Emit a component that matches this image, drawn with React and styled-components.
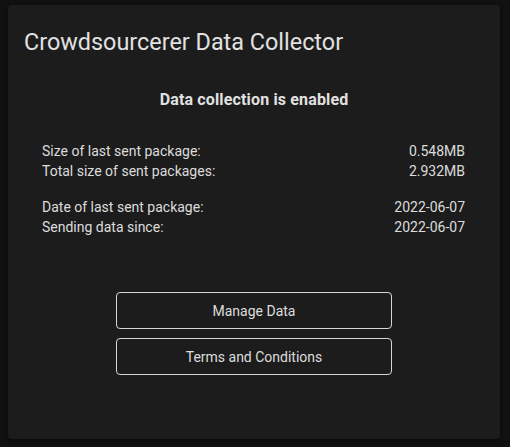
import React from "react";
import styled, { createGlobalStyle } from "styled-components";

const Global = createGlobalStyle`
  html, body { margin: 0; padding: 0; background: #111111; }
  body { font-family: Roboto, "Noto Sans", sans-serif; color: #e0e0e0; }
`;

const Page = styled.div`
  padding: 5px 10px 8px 8px;
`;

const Card = styled.section`
  box-sizing: border-box;
  height: 434px;
  background: #1c1c1c;
  border-radius: 4px;
  box-shadow: 0 2px 4px rgba(0, 0, 0, 0.5);
  padding: 22px 16px 0 16px;
  display: flex;
  flex-direction: column;
`;

const Title = styled.h1`
  margin: 0;
  font-size: 23.4px;
  font-weight: 400;
  line-height: 30px;
  color: #e1e1e1;
`;

const Status = styled.h2`
  margin: 33px 0 0 0;
  font-size: 16px;
  font-weight: 700;
  line-height: 20px;
  letter-spacing: 0.15px;
  text-align: center;
  color: #e1e1e1;
`;

const Stats = styled.div`
  margin: 31px 19px 0 18px;
  display: flex;
  flex-direction: column;
  gap: 16px;
`;

const Group = styled.div`
  display: flex;
  flex-direction: column;
`;

const Row = styled.div`
  display: flex;
  justify-content: space-between;
  font-size: 14px;
  line-height: 20px;
  color: #dcdcdc;
`;

const Actions = styled.div`
  margin-top: 55px;
  display: flex;
  flex-direction: column;
  align-items: center;
  gap: 9px;
`;

const Button = styled.button`
  box-sizing: border-box;
  width: 276px;
  height: 37px;
  background: transparent;
  border: 1.5px solid #d6d6d6;
  border-radius: 4px;
  color: #dcdcdc;
  font-family: Roboto, "Noto Sans", sans-serif;
  font-size: 14px;
  cursor: pointer;
`;

const stats = [
  [
    ["Size of last sent package:", "0.548MB"],
    ["Total size of sent packages:", "2.932MB"],
  ],
  [
    ["Date of last sent package:", "2022-06-07"],
    ["Sending data since:", "2022-06-07"],
  ],
];

export default function App() {
  return (
    <>
      <Global />
      <Page>
        <Card>
          <Title>Crowdsourcerer Data Collector</Title>
          <Status>Data collection is enabled</Status>
          <Stats>
            {stats.map((g, i) => (
              <Group key={i}>
                {g.map(([k, v]) => (
                  <Row key={k}>
                    <span>{k}</span>
                    <span>{v}</span>
                  </Row>
                ))}
              </Group>
            ))}
          </Stats>
          <Actions>
            <Button>Manage Data</Button>
            <Button>Terms and Conditions</Button>
          </Actions>
        </Card>
      </Page>
    </>
  );
}
